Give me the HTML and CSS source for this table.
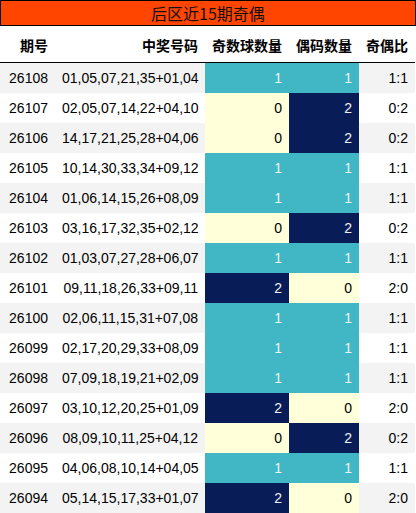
FILE: index.html
```html
<!DOCTYPE html>
<html lang="zh">
<head>
<meta charset="utf-8">
<link rel="stylesheet" href="styles.css">
</head>
<body>
<div class="title">后区近15期奇偶</div>
<table class="grid">
<colgroup>
<col class="w0"><col class="w1"><col class="w2"><col class="w3"><col class="w4">
</colgroup>
<thead>
<tr><th>期号</th><th>中奖号码</th><th>奇数球数量</th><th>偶码数量</th><th>奇偶比</th></tr>
</thead>
<tbody>
<tr><td>26108</td><td>01,05,07,21,35+01,04</td><td class="c1">1</td><td class="c1">1</td><td>1:1</td></tr>
<tr><td>26107</td><td>02,05,07,14,22+04,10</td><td class="c0">0</td><td class="c2">2</td><td>0:2</td></tr>
<tr><td>26106</td><td>14,17,21,25,28+04,06</td><td class="c0">0</td><td class="c2">2</td><td>0:2</td></tr>
<tr><td>26105</td><td>10,14,30,33,34+09,12</td><td class="c1">1</td><td class="c1">1</td><td>1:1</td></tr>
<tr><td>26104</td><td>01,06,14,15,26+08,09</td><td class="c1">1</td><td class="c1">1</td><td>1:1</td></tr>
<tr><td>26103</td><td>03,16,17,32,35+02,12</td><td class="c0">0</td><td class="c2">2</td><td>0:2</td></tr>
<tr><td>26102</td><td>01,03,07,27,28+06,07</td><td class="c1">1</td><td class="c1">1</td><td>1:1</td></tr>
<tr><td>26101</td><td>09,11,18,26,33+09,11</td><td class="c2">2</td><td class="c0">0</td><td>2:0</td></tr>
<tr><td>26100</td><td>02,06,11,15,31+07,08</td><td class="c1">1</td><td class="c1">1</td><td>1:1</td></tr>
<tr><td>26099</td><td>02,17,20,29,33+08,09</td><td class="c1">1</td><td class="c1">1</td><td>1:1</td></tr>
<tr><td>26098</td><td>07,09,18,19,21+02,09</td><td class="c1">1</td><td class="c1">1</td><td>1:1</td></tr>
<tr><td>26097</td><td>03,10,12,20,25+01,09</td><td class="c2">2</td><td class="c0">0</td><td>2:0</td></tr>
<tr><td>26096</td><td>08,09,10,11,25+04,12</td><td class="c0">0</td><td class="c2">2</td><td>0:2</td></tr>
<tr><td>26095</td><td>04,06,08,10,14+04,05</td><td class="c1">1</td><td class="c1">1</td><td>1:1</td></tr>
<tr><td>26094</td><td>05,14,15,17,33+01,07</td><td class="c2">2</td><td class="c0">0</td><td>2:0</td></tr>
</tbody>
</table>
</body>
</html>
```
FILE: styles.css
```css
html, body {
  margin: 0;
  padding: 0;
  background: #fff;
}
body {
  font-family: "Liberation Sans", "Noto Sans CJK SC", sans-serif;
  color: #000;
}
.title {
  box-sizing: border-box;
  width: 416px;
  height: 26px;
  border: 1px solid #000;
  background: #ff4500;
  text-align: center;
  font-family: "Noto Sans CJK SC", sans-serif;
  font-size: 16px;
  line-height: 24px;
  color: #111;
}
.grid {
  border-collapse: collapse;
  table-layout: fixed;
  width: 415px;
  font-size: 14px;
}
.w0 { width: 55px; }
.w1 { width: 150px; }
.w2 { width: 84px; }
.w3 { width: 70px; }
.w4 { width: 56px; }
.grid th {
  box-sizing: border-box;
  height: 36px;
  padding: 3px 7px 0 7px;
  text-align: right;
  font-family: "Noto Sans CJK SC", sans-serif;
  font-weight: bold;
  font-size: 14px;
  border-bottom: 1px solid #000;
  white-space: nowrap;
}
.grid td {
  height: 30px;
  padding: 0 7px;
  text-align: right;
  white-space: nowrap;
}
.grid tbody tr:nth-child(odd) {
  background: #f3f3f3;
}
.grid td.c0 {
  background: #ffffd9;
  color: #000;
}
.grid td.c1 {
  background: #41b6c4;
  color: #f1f1f1;
}
.grid td.c2 {
  background: #081d58;
  color: #f1f1f1;
}
```
